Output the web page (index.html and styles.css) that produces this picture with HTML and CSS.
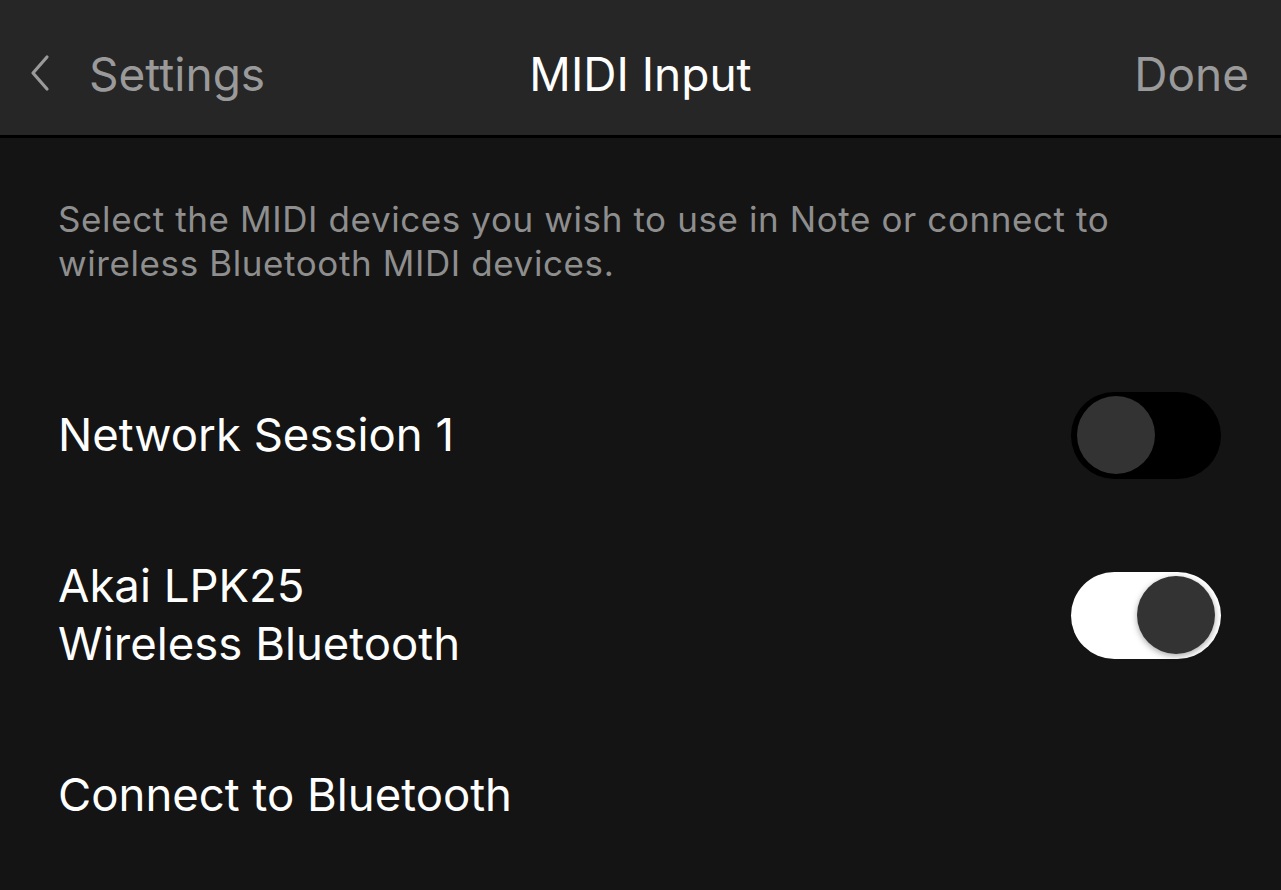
FILE: index.html
```html
<!DOCTYPE html>
<html lang="en">
<head>
  <meta charset="UTF-8">
  <title>MIDI Input</title>
  <link rel="stylesheet" href="styles.css">
</head>
<body>

  <div class="topbar">
    <div class="back">
      <svg class="chevron" width="24" height="38" viewBox="0 0 24 38">
        <polyline points="19,3 5,19 19,35" fill="none" stroke="#9a9a9a" stroke-width="3.2" stroke-linecap="round" stroke-linejoin="round"/>
      </svg>
      <span>Settings</span>
    </div>
    <div class="title">MIDI Input</div>
    <div class="done">Done</div>
  </div>

  <div class="content">
    <p class="intro">Select the MIDI devices you wish to use in Note or connect to wireless Bluetooth MIDI devices.</p>

    <div class="row">
      <div class="label">Network Session 1</div>
      <div class="toggle"><div class="knob"></div></div>
    </div>

    <div class="row">
      <div class="label">Akai LPK25<br>Wireless Bluetooth</div>
      <div class="toggle on"><div class="knob"></div></div>
    </div>

    <div class="row">
      <div class="label">Connect to Bluetooth</div>
    </div>
  </div>

</body>
</html>
```

FILE: styles.css
```css
body {
  margin: 0;
  background: #141414;
  font-family: Inter, "Noto Sans", sans-serif;
  color: #fff;
  width: 1281px;
  height: 890px;
  overflow: hidden;
}

.topbar {
  box-sizing: border-box;
  height: 138px;
  background: #262626;
  border-bottom: 3px solid #000;
  display: flex;
  align-items: center;
  justify-content: space-between;
  padding: 13px 32px 0 28px;
  position: relative;
  font-size: 46px;
}

.back {
  display: flex;
  align-items: center;
  gap: 37px;
  color: #9a9a9a;
}

.chevron {
  display: block;
  margin-top: -2px;
}

.title {
  position: absolute;
  left: 0;
  right: 0;
  text-align: center;
  pointer-events: none;
}

.done {
  color: #9a9a9a;
}

.content {
  padding: 0 60px 0 58px;
}

.intro {
  margin: 59px 0 0;
  max-width: 1100px;
  color: #8e8e8e;
  font-size: 35px;
  letter-spacing: 0.6px;
  line-height: 44px;
}

.intro + .row {
  margin-top: 60px;
}

.row {
  display: flex;
  align-items: center;
  justify-content: space-between;
  height: 180px;
  font-size: 45.5px;
  line-height: 58px;
}

.toggle {
  width: 150px;
  height: 87px;
  border-radius: 44px;
  background: #000;
  position: relative;
  flex: none;
}

.toggle .knob {
  position: absolute;
  top: 4px;
  left: 6px;
  width: 78px;
  height: 78px;
  border-radius: 50%;
  background: #333;
}

.toggle.on {
  background: #fff;
}

.toggle.on .knob {
  left: 66px;
  box-shadow: 0 2px 6px rgba(0, 0, 0, 0.35);
}
```
